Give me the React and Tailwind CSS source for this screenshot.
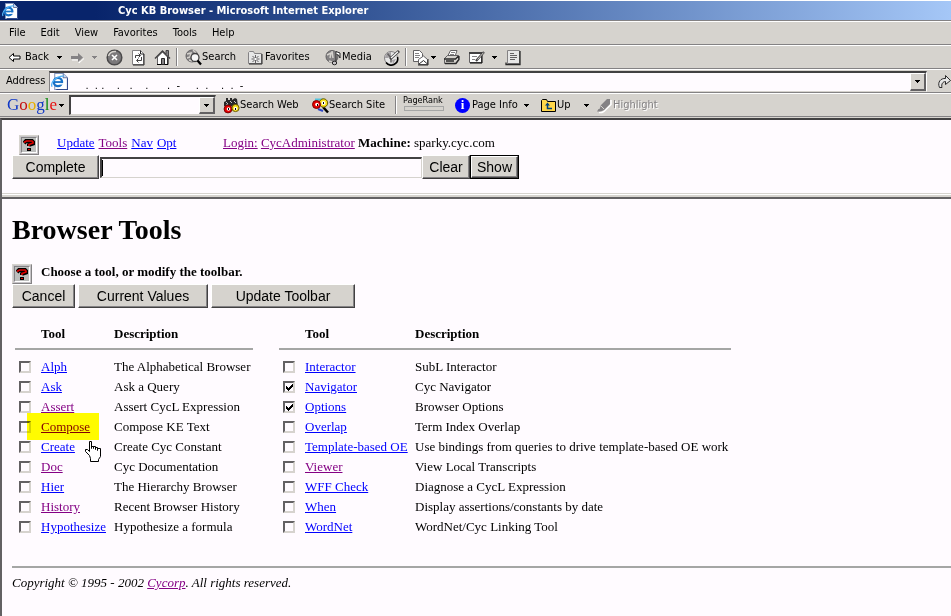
const ui = "font-['DejaVu_Sans_Condensed','DejaVu_Sans',sans-serif]";

const left = [
  ["Alph", "The Alphabetical Browser"],
  ["Ask", "Ask a Query"],
  ["Assert", "Assert CycL Expression", "v"],
  ["Compose", "Compose KE Text", "v"],
  ["Create", "Create Cyc Constant"],
  ["Doc", "Cyc Documentation", "v"],
  ["Hier", "The Hierarchy Browser"],
  ["History", "Recent Browser History", "v"],
  ["Hypothesize", "Hypothesize a formula"],
];
const right = [
  ["Interactor", "SubL Interactor"],
  ["Navigator", "Cyc Navigator", "", true],
  ["Options", "Browser Options", "", true],
  ["Overlap", "Term Index Overlap"],
  ["Template-based OE", "Use bindings from queries to drive template-based OE work"],
  ["Viewer", "View Local Transcripts", "v"],
  ["WFF Check", "Diagnose a CycL Expression"],
  ["When", "Display assertions/constants by date"],
  ["WordNet", "WordNet/Cyc Linking Tool"],
];

function Link({ visited, children }) {
  return (
    <a href="#" className={visited ? "text-[#840084] underline" : "text-[#0000ff] underline"}>
      {children}
    </a>
  );
}

function Caret({ dim }) {
  return (
    <svg width="5" height="3" viewBox="0 0 5 3" shapeRendering="crispEdges" className="shrink-0">
      <path d="M0 0h5v1h-1v1h-1v1h-1v-1h-1v-1h-1z" fill={dim ? "#848284" : "#000"} />
    </svg>
  );
}

function Sep() {
  return <span className="h-[18px] w-[2px] shrink-0 border-l border-[#848284] bg-white" />;
}

function IePage({ size }) {
  return (
    <svg width={size} height={size} viewBox="0 0 16 16" className="shrink-0">
      <path d="M3.500 0.500h8l4 4v11h-12z" fill="#fff" stroke="#8496bd" />
      <path d="M11.500 0.500v4h4" fill="#c6d7ef" stroke="#6b79a5" />
      <path d="M15.500 5v10.500H5" fill="none" stroke="#31498c" />
      <circle cx="6.500" cy="8.500" r="3.900" fill="#fff" stroke="#1871c6" strokeWidth="2.200" />
      <path d="M3 8.500h7.500" stroke="#1871c6" strokeWidth="1.700" />
      <path d="M8 10.200h5" stroke="#fff" strokeWidth="1.400" />
      <path d="M1 13C-1 9 6 2 12 3" fill="none" stroke="#52b2f7" strokeWidth="1.200" />
    </svg>
  );
}

function Eyes({ glass }) {
  return (
    <svg width="17" height="17" viewBox="0 0 17 17" className="shrink-0">
      {glass ? (
        <>
          <path d="M3 2.500h9" stroke="#52c3de" strokeWidth="2" />
          <path d="M11 10l5 5.500" stroke="#000" strokeWidth="2.500" />
          <path d="M6 12l5 2" stroke="#3149c6" strokeWidth="2" />
          <circle cx="11.500" cy="6" r="4.200" fill="#f7df18" stroke="#6b5900" />
          <circle cx="4.500" cy="7.500" r="4" fill="#e70000" stroke="#7b0000" />
          <circle cx="5" cy="7.500" r="1.800" fill="#fff" />
          <circle cx="11.500" cy="6" r="2" fill="#fff" />
          <path d="M5 7h1v2h-1zM11 5h1v2h-1z" fill="#000" />
        </>
      ) : (
        <>
          <path d="M1 10V5l2-1V1h2v2h2V1h2v2l3-2 2 1 1 7H1z" fill="#292829" />
          <path d="M3 5l2 2M7 4l2 2M11 4l2 2M3 8h2" stroke="#c6c3c6" />
          <circle cx="5" cy="12" r="3.900" fill="#e70000" stroke="#7b0000" />
          <circle cx="12.500" cy="11" r="3.600" fill="#f7df18" stroke="#6b5900" />
          <circle cx="5.500" cy="12" r="1.800" fill="#fff" />
          <circle cx="12.500" cy="11.500" r="1.700" fill="#fff" />
          <path d="M5 11h1v2h-1zM12 11h1v2h-1z" fill="#000" />
        </>
      )}
    </svg>
  );
}

function Svg({ children, w = 17 }) {
  return (
    <svg width={w} height="17" viewBox={"0 0 " + w + " 17"} className="shrink-0" fill="none">
      {children}
    </svg>
  );
}

function Tool({ children, className = "" }) {
  return (
    <button type="button" className={"flex h-full shrink-0 items-center whitespace-nowrap " + className}>
      {children}
    </button>
  );
}

function Band({ children, className = "" }) {
  return (
    <div className={"flex h-6 items-center overflow-hidden border-t border-b border-t-white border-b-[#848284] bg-[#d6d3ce] " + className}>
      {children}
    </div>
  );
}

function Help() {
  return (
    <button
      type="button"
      aria-label="Help"
      className="size-5 shrink-0 border border-t-[#d6d3ce] border-l-[#d6d3ce] border-r-[#848284] border-b-[#848284] bg-[#c6c3c6] p-px"
    >
      <span className="flex size-4 items-center justify-center border border-t-[#848284] border-l-[#848284] border-r-white border-b-white bg-[#bdbebd]">
        <svg width="12" height="12" viewBox="0 0 12 12" fill="none">
          <path d="M1 4L3 2H9L10 3V4.500L6 6V7" stroke="#000" strokeWidth="4" />
          <path d="M4 9h4v3h-4z" fill="#000" />
          <path d="M1 3.500L3.500 2H9L10 3V4L6 5.500V7" stroke="#de0000" strokeWidth="1.700" />
          <path d="M5 10h2v1h-2z" fill="#de0000" />
        </svg>
      </span>
    </button>
  );
}

function Push({ children, className }) {
  return (
    <button
      type="button"
      className={
        "h-6 shrink-0 border border-t-white border-l-white border-r-[#424142] border-b-[#424142] bg-[#d6d3ce] text-center font-['Liberation_Sans',sans-serif] text-[14px] leading-5 shadow-[inset_-1px_-1px_0_#848284] " +
        className
      }
    >
      {children}
    </button>
  );
}

function Tick({ checked, label }) {
  return (
    <span className="grid size-3">
      <input
        type="checkbox"
        aria-label={label}
        defaultChecked={checked}
        className="peer col-start-1 row-start-1 size-3 appearance-none border-2 border-t-[#636163] border-l-[#636163] border-r-[#d6d3ce] border-b-[#d6d3ce] bg-[#fffbff]"
      />
      <svg viewBox="0 0 12 12" shapeRendering="crispEdges" className="pointer-events-none invisible col-start-1 row-start-1 size-3 peer-checked:visible">
        <path d="M3 5h1v1h1v1h1v-1h1v-1h1v-1h1v-1h1v3h-1v1h-1v1h-1v1h-1v1h-1v-1h-1v-1h-1z" fill="#000" />
      </svg>
    </span>
  );
}

function ToolTable({ rows, toolCol, className = "" }) {
  return (
    <table className={"shrink-0 border-collapse text-left " + className}>
      <thead>
        <tr className="h-[30px] border-b-2 border-[#a5a6a5] align-middle">
          <td className="w-[26px]" />
          <th className={toolCol}>Tool</th>
          <th>Description</th>
        </tr>
        <tr className="h-2" />
      </thead>
      <tbody>
        {rows.map(([name, text, visited, on]) => (
          <tr key={name} className="h-5">
            <td className="pl-1">
              <Tick checked={on} label={name} />
            </td>
            <td className="whitespace-nowrap">
              {name === "Compose" ? (
                <span className="relative">
                  <span className="absolute -top-[6px] -left-[14px] h-[27px] w-[72px] bg-[#ffff00] mix-blend-multiply" />
                  <a href="#" className="relative text-[#840000] underline">{name}</a>
                  <svg width="18" height="23" viewBox="0 0 18 23" className="absolute top-[21px] left-[43px] z-10">
                    <path
                      d="M5.500 15.500L1.500 11.500V9.500H3.500L5.500 11.500V1.500H7.500V8.500V6.500H9.500V8.500V6.500H11.500V9.500V7.500H13.500V10.500V8.500H16.500V16.500L14.500 19.500V21.500H6.500V18.500Z"
                      fill="#fff"
                      stroke="#000"
                    />
                  </svg>
                </span>
              ) : (
                <Link visited={visited}>{name}</Link>
              )}
            </td>
            <td className="whitespace-nowrap">{text}</td>
          </tr>
        ))}
      </tbody>
    </table>
  );
}

export default function App() {
  return (
    <div className="flex min-h-screen flex-col bg-[#fffbff] text-black">
      <header className={"border-t border-b border-t-white border-b-[#d6d3ce] text-[11px] leading-4 " + ui}>
        <div className="flex h-[19px] items-center bg-linear-to-r from-[#08246b] from-10% to-[#a5c7f7] pl-[2px] font-bold text-white">
          <IePage size={16} />
          <h1 className="ml-[100px] whitespace-nowrap">Cyc KB Browser - Microsoft Internet Explorer</h1>
        </div>
        <div className="h-px bg-[#848284]" />
        <Band className="gap-[15px] pl-[9px]">
          {["File", "Edit", "View", "Favorites", "Tools", "Help"].map((m) => (
            <button type="button" key={m}>{m}</button>
          ))}
        </Band>
        <Band className="pl-2">
          <Tool className="w-[54px] gap-1">
            <Svg w={13}>
              <path d="M1 8.500L5.500 4.500V7H12V10H5.500V12.500Z" stroke="#000" fill="#fff" />
            </Svg>
            Back <span className="ml-1"><Caret /></span>
          </Tool>
          <Tool className="ml-2 w-7 gap-2">
            <Svg w={14}>
              <path d="M14 9.500L9 14V11H2" stroke="#fff" />
              <path d="M13 8.500L8 4V7H1V10H8V13Z" fill="#848284" />
            </Svg>
            <Caret dim />
          </Tool>
          <Tool className="ml-2">
            <Svg>
              <circle cx="8.500" cy="8.500" r="7.300" fill="#7b797b" stroke="#4a494a" strokeWidth="1.500" />
              <path d="M2.500 7Q4 2 10 2.500" stroke="#d6d3ce" strokeWidth="1.500" />
              <path d="M6 6l5 5M11 6l-5 5" stroke="#fff" strokeWidth="1.600" />
            </Svg>
          </Tool>
          <Tool className="ml-[7px]">
            <Svg>
              <path d="M2.500 1.500h8l3 3v11h-11z" fill="#fff" stroke="#848284" />
              <path d="M14 5v11H3M10.500 1.500v3.500H14" stroke="#292829" />
              <path d="M5.500 9V6.500H10M8.500 4.500l2 2-2 2M11.500 8v3.500H7M8.500 9.500l-2 2 2 2" stroke="#424142" />
            </Svg>
          </Tool>
          <Tool className="ml-[7px]">
            <Svg>
              <path d="M3.500 8v7.500h10V8L8.500 3Z" fill="#fff" stroke="#636163" />
              <path d="M3 15.500h11V8" stroke="#000" />
              <path d="M1 9.500l7.500-7.500L16 9.500" stroke="#424142" strokeWidth="1.500" />
              <path d="M12 5V1.500h2.500V7" fill="#848284" stroke="#424142" />
              <path d="M7.500 9.500h3v6h-3z" fill="#848284" stroke="#292829" />
            </Svg>
          </Tool>
          <span className="mr-[7px] ml-[5px] flex"><Sep /></span>
          <Tool className="w-[52px]">
            <Svg>
              <circle cx="7" cy="7" r="6" fill="#848284" stroke="#636163" />
              <path d="M2 5l4-1-1 4-3 1M8 1l3 3M4 11l3 1" stroke="#d6d3ce" strokeWidth="1.500" />
              <circle cx="10" cy="8.500" r="4" fill="#f7f7f7" stroke="#424142" strokeWidth="1.300" />
              <path d="M12.500 11.500l3.500 4" stroke="#000" strokeWidth="2.300" />
            </Svg>
            Search
          </Tool>
          <Tool className="ml-[10px] w-[66px] gap-px">
            <Svg w={17}>
              <path d="M1.500 14.500v-11l1-1h4l1 2h7v10z" fill="#e7e7e7" stroke="#848284" />
              <path d="M15 5v10H2" stroke="#292829" />
              <path d="M8.500 6v8M4.500 10h8M5.500 7l6 6M11.500 7l-6 6" stroke="#636163" />
              <path d="M7.500 9h2v2h-2z" fill="#fff" />
            </Svg>
            Favorites
          </Tool>
          <Tool className="ml-3 w-[46px]">
            <Svg>
              <circle cx="7" cy="7.500" r="6" fill="#848284" stroke="#636163" />
              <path d="M2 6l4-2-1 5M7 2l1 7M4 12l3 1" stroke="#d6d3ce" strokeWidth="1.500" />
              <path d="M11 14V2.500l4 1.500v5l-1.500-3-2-.5" fill="#fff" stroke="#292829" />
              <ellipse cx="9.500" cy="14" rx="2.200" ry="1.800" fill="#c6c3c6" stroke="#292829" />
            </Svg>
            Media
          </Tool>
          <Tool className="ml-3">
            <Svg>
              <circle cx="8" cy="9" r="6.500" fill="#e7e7e7" stroke="#848284" />
              <path d="M14.500 8A6.500 6.500 0 0 1 3 13.500" stroke="#000" strokeWidth="1.500" />
              <path d="M2 9A6 6 0 0 1 8 3V7L5 9zM10 15l-1-4 4-1z" fill="#a5a2a5" />
              <path d="M8 9L4.500 4.500M8 9v4.500" stroke="#636163" strokeWidth="1.500" />
              <path d="M7 10l9-8" stroke="#424142" strokeWidth="3" />
              <path d="M8 9l7-6.300" stroke="#fff" strokeWidth="1.300" />
            </Svg>
          </Tool>
          <span className="mr-[5px] ml-[5px] flex"><Sep /></span>
          <Tool className="gap-[2px]">
            <Svg>
              <path d="M1.500 1.500h6l3 3v8h-9z" fill="#fff" stroke="#636163" />
              <path d="M3 4.500h4M3 6.500h5M3 8.500h4" stroke="#848284" />
              <path d="M6.500 10.500l5-3.500 4 3.500v5h-9z" fill="#fff" stroke="#636163" />
              <path d="M7 15l4.500-3.500 4 3.500M6 16h10V10" stroke="#292829" />
            </Svg>
            <Caret />
          </Tool>
          <Tool className="ml-[7px]">
            <Svg>
              <path d="M4.500 7.500l3-6h6.500L12 7.500" fill="#fff" stroke="#636163" />
              <path d="M8 3.500h4M7 5.500h4" stroke="#848284" />
              <path d="M1.500 9.500l3-3h11v4l-3 4h-11z" fill="#d6d3ce" stroke="#636163" />
              <path d="M1 10h11.500l3-3M2 14.500h11l3-4V7M3 12h8" stroke="#292829" strokeWidth="1.300" />
            </Svg>
          </Tool>
          <Tool className="ml-2 gap-[7px]">
            <Svg>
              <path d="M1.500 3.500h12v10h-12z" fill="#fff" stroke="#636163" />
              <path d="M1 4h13" stroke="#424142" strokeWidth="2" />
              <path d="M14 4v10H2" stroke="#000" />
              <path d="M4 7.500h5M4 10.500h3" stroke="#848284" />
              <path d="M8 12l8-9" stroke="#424142" strokeWidth="2.300" />
              <path d="M9.500 10.500l6-6.800" stroke="#d6d3ce" />
            </Svg>
            <Caret />
          </Tool>
          <Tool className="ml-2">
            <Svg>
              <path d="M2.500 1.500h12v13h-12z" fill="#e7e7e7" stroke="#848284" />
              <path d="M15 2v13.500H1v-2" stroke="#292829" strokeWidth="1.300" />
              <path d="M5 4.500h4M5 6.500h7M5 8.500h7M5 10.500h5" stroke="#636163" />
            </Svg>
          </Tool>
        </Band>
        <Band className="pl-[6px]">
          <label htmlFor="address" className="w-[43px] shrink-0">Address</label>
          <div className="flex h-[21px] min-w-0 grow items-stretch border border-t-2 border-t-[#424142] border-l-[#848284] border-r-white border-b-[#d6d3ce] bg-[#fffbff]">
            <span className="flex items-center pl-px"><IePage size={17} /></span>
            <input id="address" defaultValue="   .  . .    .   .    .      .  -     .  .    .  .  -" className="min-w-0 grow bg-transparent pt-2 pl-2 outline-none" />
            <button type="button" aria-label="Show addresses" className="flex w-4 items-center justify-center border border-t-white border-l-white border-r-2 border-b-2 border-r-[#636163] border-b-[#636163] bg-[#d6d3ce]">
              <Caret />
            </button>
          </div>
          <button type="button" aria-label="Go" className="ml-[10px] w-[14px] shrink-0 overflow-hidden">
            <Svg>
              <path d="M2.500 14.500C0 9 4 5 8.500 5.500V2.500L13.500 7.500L8.500 11.500V8.500C6 8.500 4 11 5 14.500Z" fill="#e7e7e7" stroke="#292829" />
            </Svg>
          </button>
        </Band>
        <Band className="pl-[7px]">
          <Tool className="w-[62px] gap-[3px]">
            <span className="w-[49px] font-['Liberation_Serif',serif] text-[17px]">
              <span className="text-[#1038c6]">G</span>
              <span className="text-[#c61010]">o</span>
              <span className="text-[#e7ae00]">o</span>
              <span className="text-[#1038c6]">g</span>
              <span className="text-[#108a10]">l</span>
              <span className="text-[#e71010]">e</span>
            </span>
            <Caret />
          </Tool>
          <div className="flex h-5 w-[147px] shrink-0 border border-t-2 border-l-2 border-t-[#424142] border-l-[#424142] border-r-[#d6d3ce] border-b-[#d6d3ce] bg-[#fffbff]">
            <input aria-label="Google search" className="min-w-0 grow bg-transparent outline-none" />
            <button type="button" aria-label="Search history" className="flex w-4 items-center justify-center border border-t-white border-l-white border-r-2 border-b-2 border-r-[#636163] border-b-[#636163] bg-[#d6d3ce]">
              <Caret />
            </button>
          </div>
          <Tool className="ml-[7px] w-[76px]"><Eyes />Search Web</Tool>
          <Tool className="ml-[13px] w-[73px]"><Eyes glass />Search Site</Tool>
          <span className="mr-[6px] ml-[10px] flex"><Sep /></span>
          <Tool className="w-[44px] flex-col items-start pt-px text-[9px] leading-[11px]">
            PageRank
            <span className="ml-px h-[5px] w-10 border border-[#a5a6a5]" />
          </Tool>
          <Tool className="ml-2 w-[76px] gap-[2px]">
            <span className="flex size-[15px] items-center justify-center rounded-full bg-[#0000ff] font-['Liberation_Serif',serif] text-[13px] leading-[14px] font-bold text-white">i</span>
            Page Info
            <span className="ml-1"><Caret /></span>
          </Tool>
          <Tool className="ml-[9px] w-[49px]">
            <Svg>
              <path d="M1.500 14.500v-11l1-1h4l1 2h8v10z" fill="#ffd74a" stroke="#000" />
              <path d="M5 8.500l2.500-3L10 8.500z" fill="#00417b" />
              <path d="M7.500 7v4.500H12" stroke="#00417b" strokeWidth="1.500" />
            </Svg>
            Up
            <span className="ml-[13px]"><Caret /></span>
          </Tool>
          <Tool className="ml-[7px] text-[#848284]">
            <Svg>
              <path d="M3 15.500h3l2-1 7-7V3" stroke="#fff" strokeWidth="1.500" />
              <path d="M1 14.500l1.500-2.500h1L5 8l6-6h3v5l-6 6-2 1-2 .5z" fill="#848284" />
              <path d="M5 9l3 3" stroke="#d6d3ce" />
            </Svg>
            <span className="[text-shadow:1px_1px_0_#fff]">Highlight</span>
          </Tool>
        </Band>
      </header>

      <div className="flex grow flex-col border-t-2 border-l-2 border-t-[#424142] border-l-[#636163] font-['Liberation_Serif',serif] text-[13px] leading-4">
        <section className="h-[73px] px-[10px] pt-[15px]">
          <div className="flex h-5 items-start pl-[7px]">
            <Help />
            <nav className="ml-[18px] flex w-[166px] shrink-0 gap-1">
              <Link>Update</Link>
              <Link visited>Tools</Link>
              <Link>Nav</Link>
              <Link>Opt</Link>
            </nav>
            <p className="whitespace-nowrap">
              <Link visited>Login:</Link> <Link visited>CycAdministrator</Link> <b>Machine:</b> sparky.cyc.com
            </p>
          </div>
          <form className="flex items-center">
            <Push className="w-[87px]">Complete</Push>
            <div className="ml-px flex h-[21px] w-[322px] items-center border border-t-2 border-l-2 border-t-[#424142] border-l-[#424142] border-r-[#d6d3ce] border-b-[#d6d3ce]">
              <span className="h-4 w-px bg-black" />
              <input aria-label="Complete" className="min-w-0 grow bg-transparent outline-none" />
            </div>
            <Push className="w-12">Clear</Push>
            <span className="flex border border-black"><Push className="h-[22px] w-[47px]">Show</Push></span>
          </form>
        </section>
        <div className="h-px shrink-0 bg-[#d6d3ce]" />
        <div className="h-[5px] shrink-0 border-t border-b-2 border-t-white border-b-[#636163] bg-[#d6d3ce]" />

        <main className="px-[10px] pt-[16px]">
          <h2 className="text-[28px] leading-[30px] font-bold">Browser Tools</h2>
          <div className="mt-[19px] flex h-5 gap-[9px]">
            <Help />
            <b>Choose a tool, or modify the toolbar.</b>
          </div>
          <div className="flex gap-[3px]">
            <Push className="w-[63px]">Cancel</Push>
            <Push className="w-[130px]">Current Values</Push>
            <Push className="w-36">Update Toolbar</Push>
          </div>
          <div className="mt-[11px] flex gap-[26px] pl-[3px]">
            <ToolTable rows={left} toolCol="w-[73px]" className="w-[238px]" />
            <ToolTable rows={right} toolCol="w-[110px]" className="w-[452px]" />
          </div>
          <hr className="-mr-[10px] mt-[29px] border-t-2 border-[#a5a6a5]" />
          <footer className="mt-[7px] italic">
            Copyright © 1995 - 2002 <Link visited>Cycorp</Link>. All rights reserved.
          </footer>
        </main>
      </div>
    </div>
  );
}
